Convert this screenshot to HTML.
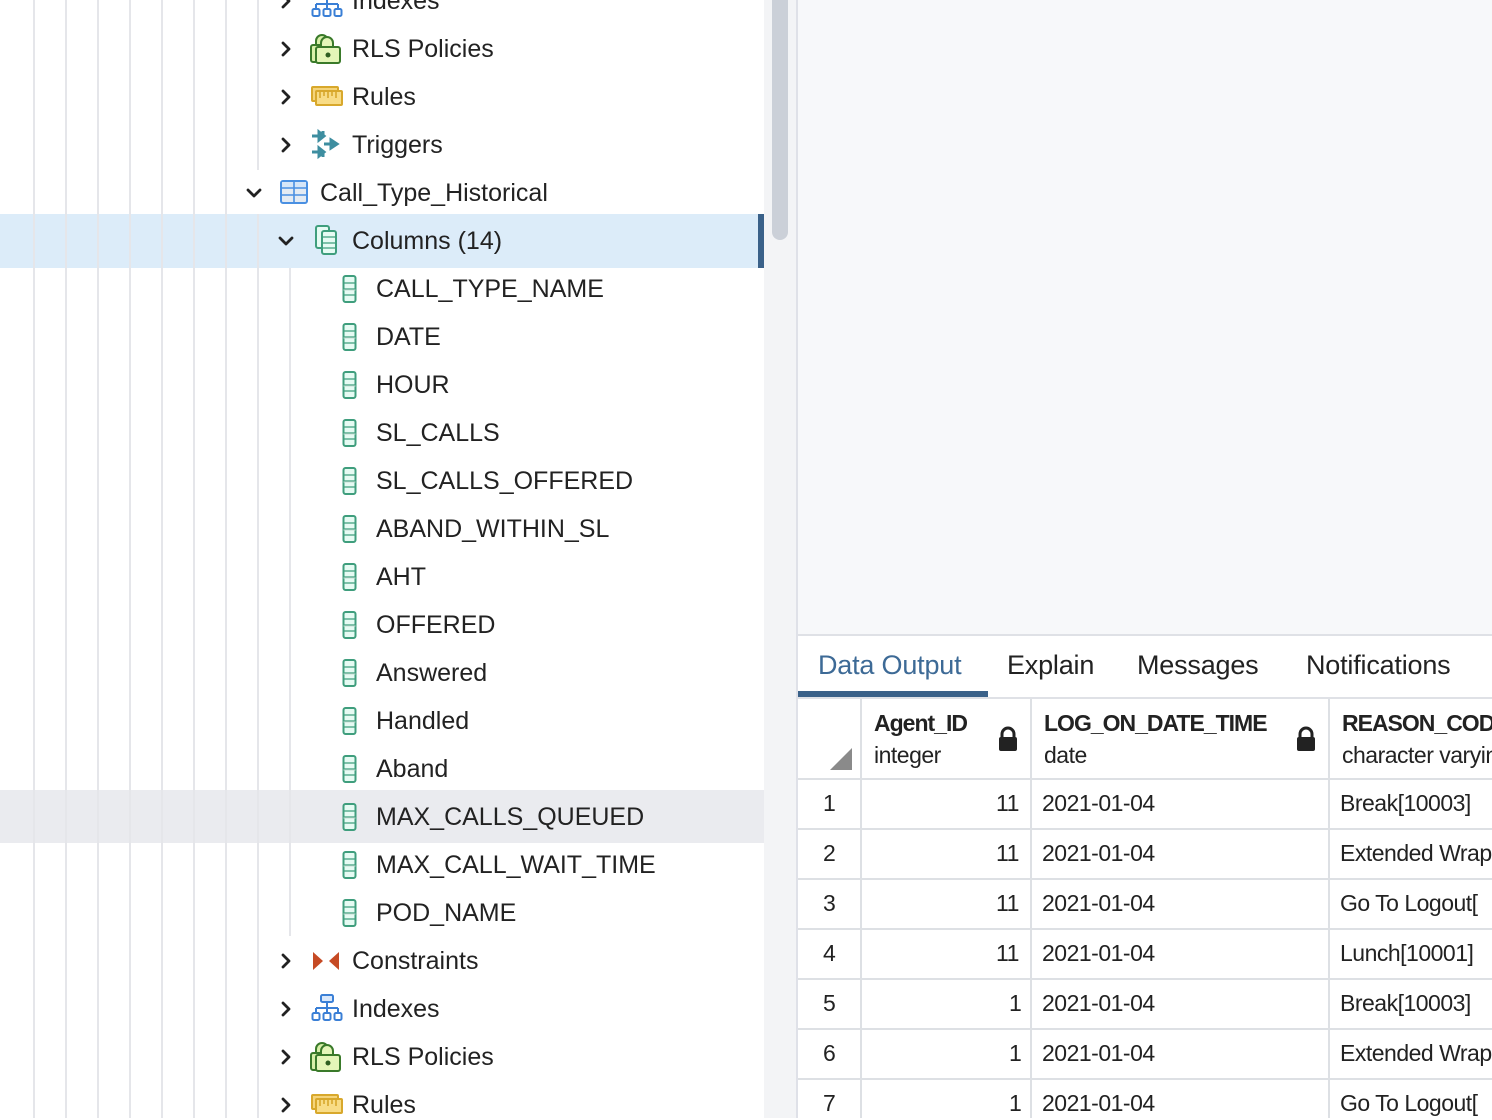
<!DOCTYPE html>
<html><head><meta charset="utf-8"><style>
*{margin:0;padding:0;box-sizing:border-box}
body{width:1492px;height:1118px;overflow:hidden;position:relative;background:#fff;font-family:"Liberation Sans",sans-serif;color:#222}
.vl{position:absolute;width:2px;background:#e5e6ea}
.hl{position:absolute;left:0;width:764px}
.chev{position:absolute;width:24px;height:24px}
.ic{position:absolute}
.t{position:absolute;font-size:25px;color:#222;white-space:nowrap;margin-top:0px}
.cell{position:absolute;font-size:23px;color:#222;white-space:nowrap;letter-spacing:-0.5px}
.tab{position:absolute;font-size:27px;color:#222;white-space:nowrap;letter-spacing:-0.2px}
</style></head><body>

<div class="hl" style="top:214px;height:54px;background:#dcecf9"></div>
<div style="position:absolute;left:758px;top:214px;width:6px;height:54px;background:#3a6189"></div>
<div class="hl" style="top:790px;height:53px;background:#eaebef"></div>

<div class="vl" style="left:33px;top:0;height:1118px"></div>
<div class="vl" style="left:65px;top:0;height:1118px"></div>
<div class="vl" style="left:97px;top:0;height:1118px"></div>
<div class="vl" style="left:129px;top:0;height:1118px"></div>
<div class="vl" style="left:161px;top:0;height:1118px"></div>
<div class="vl" style="left:193px;top:0;height:1118px"></div>
<div class="vl" style="left:225px;top:0;height:1118px"></div>
<div class="vl" style="left:257px;top:0;height:170px"></div>
<div class="vl" style="left:257px;top:214px;height:904px"></div>
<div class="vl" style="left:289px;top:268px;height:668px"></div>

<div style="position:absolute;left:764px;top:0;width:33px;height:1118px;background:#f3f4f6"></div>
<div style="position:absolute;left:772px;top:-10px;width:16px;height:250px;border-radius:8px;background:#cbd0d8"></div>
<div style="position:absolute;left:796px;top:0;width:2px;height:1118px;background:#dfe1e8"></div>

<svg width="0" height="0" style="position:absolute">
<defs>
<symbol id="chr" viewBox="0 0 24 24"><path d="M9 6l6 6-6 6" fill="none" stroke="#222" stroke-width="2.8" stroke-linecap="round" stroke-linejoin="round"/></symbol>
<symbol id="chd" viewBox="0 0 24 24"><path d="M6 9l6 6 6-6" fill="none" stroke="#222" stroke-width="2.8" stroke-linecap="round" stroke-linejoin="round"/></symbol>
<symbol id="col" viewBox="0 0 14 28"><rect x="1" y="1" width="12" height="26" rx="2" fill="#e6fbf3" stroke="#3f9e7d" stroke-width="2"/><path d="M1 8h12M1 14h12M1 20h12" stroke="#3f9e7d" stroke-width="1.2"/><path d="M1 15h12" stroke="#c8ddd5" stroke-width="1"/></symbol>
<symbol id="idx" viewBox="0 0 32 28"><rect x="10" y="1" width="12" height="7" rx="1.5" fill="#d9e8fb" stroke="#3a7fd6" stroke-width="2"/><path d="M16 8v6M5 14h22M5 14v5M16 14v5M27 14v5" stroke="#3a7fd6" stroke-width="2" fill="none"/><rect x="1.5" y="19" width="7" height="7" rx="1.5" fill="#fff" stroke="#3a7fd6" stroke-width="2"/><rect x="12.5" y="19" width="7" height="7" rx="1.5" fill="#fff" stroke="#3a7fd6" stroke-width="2"/><rect x="23.5" y="19" width="7" height="7" rx="1.5" fill="#fff" stroke="#3a7fd6" stroke-width="2"/></symbol>
<symbol id="rls" viewBox="0 0 32 32"><path d="M6 14v-5a6 6 0 0 1 12 0v5" fill="#d8f0a8" stroke="#3a7a2a" stroke-width="2"/><rect x="1" y="13" width="22" height="17" rx="2" fill="#d8f0a8" stroke="#3a7a2a" stroke-width="2"/><path d="M11 16v-5a6 6 0 0 1 12 0v5" fill="#e4f6b8" stroke="#3a7a2a" stroke-width="2"/><rect x="6" y="15" width="24" height="16" rx="2" fill="#e4f6b8" stroke="#3a7a2a" stroke-width="2"/><circle cx="18" cy="23" r="2.5" fill="#2f5f22"/></symbol>
<symbol id="rul" viewBox="0 0 32 24"><rect x="1" y="2" width="26" height="14" rx="1" fill="#f5d47a" stroke="#d8a82c" stroke-width="2"/><rect x="5" y="6" width="26" height="14" rx="1" fill="#f8dc86" stroke="#d8a82c" stroke-width="2"/><path d="M9 6v7M13 6v5M17 6v7M21 6v5M25 6v7" stroke="#d8a82c" stroke-width="1.6"/></symbol>
<symbol id="trg" viewBox="0 0 32 32"><path d="M2 8h7M9 4l5 4-5 4z M2 24h7M9 20l5 4-5 4z M14 16h7M21 12l6 4-6 4z" stroke="#3e8ea0" stroke-width="3" fill="#3e8ea0"/><path d="M13 3v4M13 25v4" stroke="#3e8ea0" stroke-width="3"/></symbol>
<symbol id="tbl" viewBox="0 0 28 24"><rect x="1" y="1" width="26" height="22" rx="2" fill="#e4ebf3" stroke="#4a90e2" stroke-width="2"/><rect x="2" y="2" width="24" height="6" fill="#d6e6f8"/><path d="M1 8h26M1 15h26M14 1v22" stroke="#4a90e2" stroke-width="1.6"/></symbol>
<symbol id="cols" viewBox="0 0 24 30"><rect x="1" y="1" width="13" height="22" rx="2" fill="#e6fbf3" stroke="#3f9e7d" stroke-width="2"/><rect x="7" y="6" width="14" height="23" rx="2" fill="#e6fbf3" stroke="#3f9e7d" stroke-width="2"/><path d="M7 12h14M7 18h14M7 23h14" stroke="#3f9e7d" stroke-width="1.2"/></symbol>
<symbol id="con" viewBox="0 0 30 22"><path d="M2 2l10 9-10 9z" fill="#c64a24"/><path d="M28 2l-10 9 10 9z" fill="#c64a24"/></symbol>
</defs></svg>

<svg class="chev" style="left:274px;top:-11px"><use href="#chr"/></svg>
<svg class="ic" style="left:311px;top:-10px" width="32" height="28"><use href="#idx"/></svg>
<div class="t" style="left:352px;top:-13px">Indexes</div>

<svg class="chev" style="left:274px;top:37px"><use href="#chr"/></svg>
<svg class="ic" style="left:310px;top:32px" width="32" height="32"><use href="#rls"/></svg>
<div class="t" style="left:352px;top:35px">RLS Policies</div>

<svg class="chev" style="left:274px;top:85px"><use href="#chr"/></svg>
<svg class="ic" style="left:311px;top:85px" width="32" height="24"><use href="#rul"/></svg>
<div class="t" style="left:352px;top:83px">Rules</div>

<svg class="chev" style="left:274px;top:133px"><use href="#chr"/></svg>
<svg class="ic" style="left:310px;top:128px" width="32" height="32"><use href="#trg"/></svg>
<div class="t" style="left:352px;top:131px">Triggers</div>

<svg class="chev" style="left:242px;top:181px"><use href="#chd"/></svg>
<svg class="ic" style="left:280px;top:180px" width="28" height="24"><use href="#tbl"/></svg>
<div class="t" style="left:320px;top:179px">Call_Type_Historical</div>

<svg class="chev" style="left:274px;top:229px"><use href="#chd"/></svg>
<svg class="ic" style="left:315px;top:225px" width="24" height="30"><use href="#cols"/></svg>
<div class="t" style="left:352px;top:227px">Columns (14)</div>

<svg class="ic" style="left:342px;top:275px" width="15" height="28"><use href="#col"/></svg><div class="t" style="left:376px;top:275px">CALL_TYPE_NAME</div>
<svg class="ic" style="left:342px;top:323px" width="15" height="28"><use href="#col"/></svg><div class="t" style="left:376px;top:323px">DATE</div>
<svg class="ic" style="left:342px;top:371px" width="15" height="28"><use href="#col"/></svg><div class="t" style="left:376px;top:371px">HOUR</div>
<svg class="ic" style="left:342px;top:419px" width="15" height="28"><use href="#col"/></svg><div class="t" style="left:376px;top:419px">SL_CALLS</div>
<svg class="ic" style="left:342px;top:467px" width="15" height="28"><use href="#col"/></svg><div class="t" style="left:376px;top:467px">SL_CALLS_OFFERED</div>
<svg class="ic" style="left:342px;top:515px" width="15" height="28"><use href="#col"/></svg><div class="t" style="left:376px;top:515px">ABAND_WITHIN_SL</div>
<svg class="ic" style="left:342px;top:563px" width="15" height="28"><use href="#col"/></svg><div class="t" style="left:376px;top:563px">AHT</div>
<svg class="ic" style="left:342px;top:611px" width="15" height="28"><use href="#col"/></svg><div class="t" style="left:376px;top:611px">OFFERED</div>
<svg class="ic" style="left:342px;top:659px" width="15" height="28"><use href="#col"/></svg><div class="t" style="left:376px;top:659px">Answered</div>
<svg class="ic" style="left:342px;top:707px" width="15" height="28"><use href="#col"/></svg><div class="t" style="left:376px;top:707px">Handled</div>
<svg class="ic" style="left:342px;top:755px" width="15" height="28"><use href="#col"/></svg><div class="t" style="left:376px;top:755px">Aband</div>
<svg class="ic" style="left:342px;top:803px" width="15" height="28"><use href="#col"/></svg><div class="t" style="left:376px;top:803px">MAX_CALLS_QUEUED</div>
<svg class="ic" style="left:342px;top:851px" width="15" height="28"><use href="#col"/></svg><div class="t" style="left:376px;top:851px">MAX_CALL_WAIT_TIME</div>
<svg class="ic" style="left:342px;top:899px" width="15" height="28"><use href="#col"/></svg><div class="t" style="left:376px;top:899px">POD_NAME</div>

<svg class="chev" style="left:274px;top:949px"><use href="#chr"/></svg>
<svg class="ic" style="left:311px;top:950px" width="30" height="22"><use href="#con"/></svg>
<div class="t" style="left:352px;top:947px">Constraints</div>

<svg class="chev" style="left:274px;top:997px"><use href="#chr"/></svg>
<svg class="ic" style="left:311px;top:994px" width="32" height="28"><use href="#idx"/></svg>
<div class="t" style="left:352px;top:995px">Indexes</div>

<svg class="chev" style="left:274px;top:1045px"><use href="#chr"/></svg>
<svg class="ic" style="left:310px;top:1040px" width="32" height="32"><use href="#rls"/></svg>
<div class="t" style="left:352px;top:1043px">RLS Policies</div>

<svg class="chev" style="left:274px;top:1093px"><use href="#chr"/></svg>
<svg class="ic" style="left:311px;top:1093px" width="32" height="24"><use href="#rul"/></svg>
<div class="t" style="left:352px;top:1091px">Rules</div>

<div style="position:absolute;left:798px;top:0;width:694px;height:634px;background:#f7f8fa"></div>
<div style="position:absolute;left:798px;top:634px;width:694px;height:2px;background:#dfe1e6"></div>
<div style="position:absolute;left:798px;top:636px;width:694px;height:63px;background:#fff"></div>
<div class="tab" style="left:818px;top:650px;color:#3d6a96">Data Output</div>
<div class="tab" style="left:1007px;top:650px">Explain</div>
<div class="tab" style="left:1137px;top:650px">Messages</div>
<div class="tab" style="left:1306px;top:650px">Notifications</div>
<div style="position:absolute;left:798px;top:691px;width:190px;height:7px;background:#3a6189"></div>
<div style="position:absolute;left:798px;top:697px;width:694px;height:2px;background:#dfe1e6"></div>

<div style="position:absolute;left:798px;top:699px;width:694px;height:419px;background:#fff"></div>
<div style="position:absolute;left:860px;top:699px;width:2px;height:419px;background:#dde0e4"></div>
<div style="position:absolute;left:1030px;top:699px;width:2px;height:419px;background:#dde0e4"></div>
<div style="position:absolute;left:1328px;top:699px;width:2px;height:419px;background:#dde0e4"></div>
<div style="position:absolute;left:798px;top:778px;width:694px;height:2px;background:#dde0e4"></div>
<div style="position:absolute;left:798px;top:828px;width:694px;height:2px;background:#dde0e4"></div>
<div style="position:absolute;left:798px;top:878px;width:694px;height:2px;background:#dde0e4"></div>
<div style="position:absolute;left:798px;top:928px;width:694px;height:2px;background:#dde0e4"></div>
<div style="position:absolute;left:798px;top:978px;width:694px;height:2px;background:#dde0e4"></div>
<div style="position:absolute;left:798px;top:1028px;width:694px;height:2px;background:#dde0e4"></div>
<div style="position:absolute;left:798px;top:1078px;width:694px;height:2px;background:#dde0e4"></div>
<svg class="ic" style="left:830px;top:748px" width="22" height="22"><path d="M22 0v22H0z" fill="#8a8a8a"/></svg>

<div class="cell" style="left:874px;top:710px;font-weight:bold;letter-spacing:-1px">Agent_ID</div>
<div class="cell" style="left:874px;top:742px">integer</div>
<svg class="ic" style="left:997px;top:726px" width="22" height="26" viewBox="0 0 22 26"><path d="M5 12V8a6 6 0 0 1 12 0v4" fill="none" stroke="#222" stroke-width="3"/><rect x="2" y="11" width="18" height="14" rx="2" fill="#222"/></svg>
<div class="cell" style="left:1044px;top:710px;font-weight:bold;letter-spacing:-1px">LOG_ON_DATE_TIME</div>
<div class="cell" style="left:1044px;top:742px">date</div>
<svg class="ic" style="left:1295px;top:726px" width="22" height="26" viewBox="0 0 22 26"><path d="M5 12V8a6 6 0 0 1 12 0v4" fill="none" stroke="#222" stroke-width="3"/><rect x="2" y="11" width="18" height="14" rx="2" fill="#222"/></svg>
<div class="cell" style="left:1342px;top:710px;font-weight:bold;letter-spacing:-1px">REASON_CODE</div>
<div class="cell" style="left:1342px;top:742px">character varying</div>

<div class="cell" style="left:823px;top:790px">1</div><div class="cell" style="left:996px;top:790px">11</div><div class="cell" style="left:1042px;top:790px">2021-01-04</div><div class="cell" style="left:1340px;top:790px">Break[10003]</div>
<div class="cell" style="left:823px;top:840px">2</div><div class="cell" style="left:996px;top:840px">11</div><div class="cell" style="left:1042px;top:840px">2021-01-04</div><div class="cell" style="left:1340px;top:840px">Extended Wrap</div>
<div class="cell" style="left:823px;top:890px">3</div><div class="cell" style="left:996px;top:890px">11</div><div class="cell" style="left:1042px;top:890px">2021-01-04</div><div class="cell" style="left:1340px;top:890px">Go To Logout[</div>
<div class="cell" style="left:823px;top:940px">4</div><div class="cell" style="left:996px;top:940px">11</div><div class="cell" style="left:1042px;top:940px">2021-01-04</div><div class="cell" style="left:1340px;top:940px">Lunch[10001]</div>
<div class="cell" style="left:823px;top:990px">5</div><div class="cell" style="left:1009px;top:990px">1</div><div class="cell" style="left:1042px;top:990px">2021-01-04</div><div class="cell" style="left:1340px;top:990px">Break[10003]</div>
<div class="cell" style="left:823px;top:1040px">6</div><div class="cell" style="left:1009px;top:1040px">1</div><div class="cell" style="left:1042px;top:1040px">2021-01-04</div><div class="cell" style="left:1340px;top:1040px">Extended Wrap</div>
<div class="cell" style="left:823px;top:1090px">7</div><div class="cell" style="left:1009px;top:1090px">1</div><div class="cell" style="left:1042px;top:1090px">2021-01-04</div><div class="cell" style="left:1340px;top:1090px">Go To Logout[</div>

</body></html>
